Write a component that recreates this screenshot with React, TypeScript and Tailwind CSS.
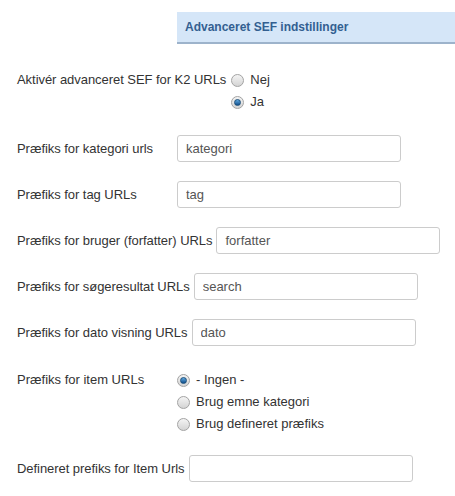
import React from "react";

function Radio({ checked }: { checked?: boolean }) {
  return (
    <span className="inline-flex h-[13px] w-[13px] shrink-0 items-center justify-center rounded-full border border-[#a3a3a3] bg-gradient-to-b from-[#f4f4f4] to-[#d4d4d4]">
      {checked && (
        <span className="h-[7px] w-[7px] rounded-full border border-[#1c4f7a] bg-gradient-to-b from-[#5fa9e0] to-[#0e4f8c]" />
      )}
    </span>
  );
}

function RadioOption({ label, checked }: { label: string; checked?: boolean }) {
  return (
    <div className="flex h-[22px] items-center gap-[6px]">
      <Radio checked={checked} />
      <span>{label}</span>
    </div>
  );
}

function TextRow({ label, value, className }: { label: string; value: string; className?: string }) {
  return (
    <div className={`flex items-center ${className ?? ""}`}>
      <label className="mr-[4px] min-w-[156px] tracking-[-0.05px]">{label}</label>
      <input
        readOnly
        value={value}
        className="h-[27px] w-[224px] rounded-[3px] border border-[#cccccc] bg-white px-[8px] text-[13px] text-[#555] outline-none"
      />
    </div>
  );
}

export default function App() {
  return (
    <div
      className="min-h-screen bg-white pt-[12px] text-[13px] text-[#333]"
      style={{ fontFamily: '"Liberation Sans", Arial, sans-serif' }}
    >
      <div className="ml-[177px] flex h-[32px] items-center border-b-2 border-[#9db3cb] bg-[#d5e6f8] pl-[8px] text-[12px] font-bold text-[#335f91]">
        Advanceret SEF indstillinger
      </div>

      <div className="pl-[17px]">
        <div className="mt-[25px] flex items-start">
          <label className="mr-[5px] flex h-[22px] min-w-[155px] items-center tracking-[-0.05px]">
            Aktivér advanceret SEF for K2 URLs
          </label>
          <div className="flex flex-col">
            <RadioOption label="Nej" />
            <RadioOption label="Ja" checked />
          </div>
        </div>

        <TextRow className="mt-[22px]" label="Præfiks for kategori urls" value="kategori" />
        <TextRow className="mt-[19px]" label="Præfiks for tag URLs" value="tag" />
        <TextRow className="mt-[19px]" label="Præfiks for bruger (forfatter) URLs" value="forfatter" />
        <TextRow className="mt-[19px]" label="Præfiks for søgeresultat URLs" value="search" />
        <TextRow className="mt-[19px]" label="Præfiks for dato visning URLs" value="dato" />

        <div className="mt-[23px] flex items-start">
          <label className="mr-[5px] flex h-[22px] min-w-[155px] items-center">Præfiks for item URLs</label>
          <div className="flex flex-col">
            <RadioOption label="- Ingen -" checked />
            <RadioOption label="Brug emne kategori" />
            <RadioOption label="Brug defineret præfiks" />
          </div>
        </div>

        <TextRow className="mt-[20px]" label="Defineret prefiks for Item Urls" value="" />
      </div>
    </div>
  );
}
